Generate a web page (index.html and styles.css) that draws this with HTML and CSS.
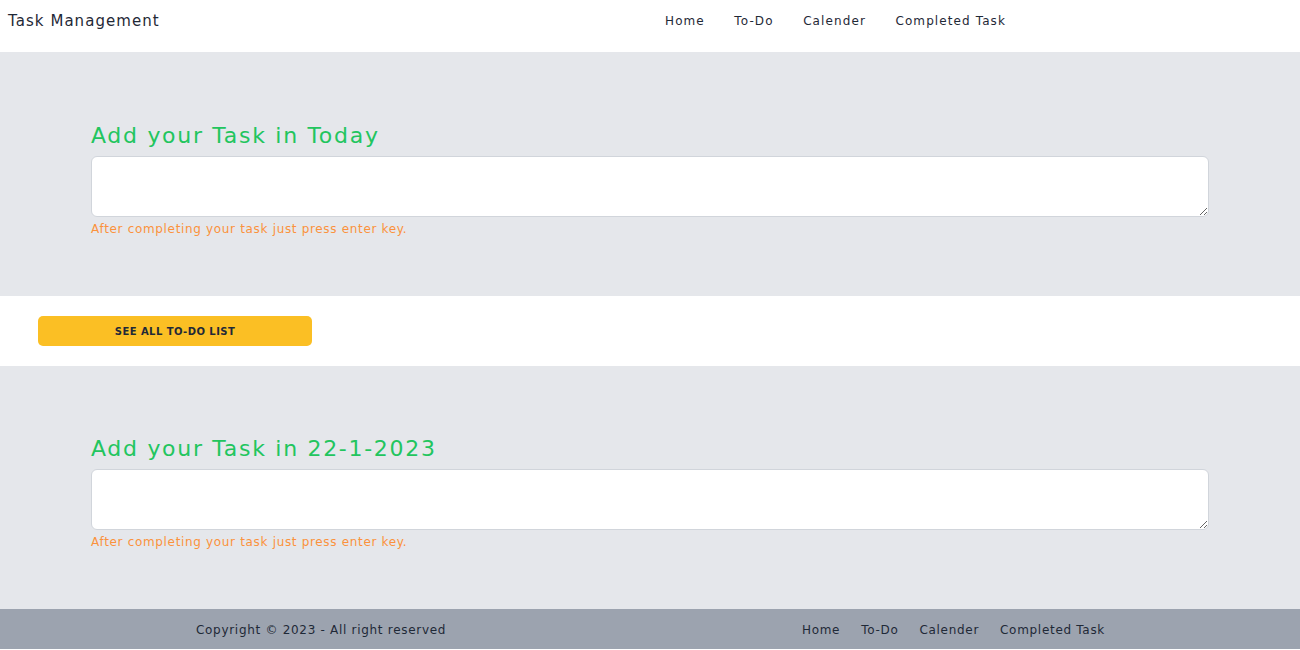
FILE: index.html
```html
<!DOCTYPE html>
<html lang="en">
<head>
<meta charset="utf-8">
<title>Task Management</title>
<link rel="stylesheet" href="styles.css">
</head>
<body>
<header class="topbar">
  <div class="brand">Task Management</div>
  <nav class="topnav">
    <a href="#">Home</a>
    <a href="#">To-Do</a>
    <a href="#">Calender</a>
    <a href="#">Completed Task</a>
  </nav>
</header>
<main>
  <section class="task-section">
    <h2 class="task-title">Add your Task in Today</h2>
    <textarea class="task-input"></textarea>
    <p class="task-hint">After completing your task just press enter key.</p>
  </section>
  <div class="action-row">
    <button class="see-all">SEE ALL TO-DO LIST</button>
  </div>
  <section class="task-section">
    <h2 class="task-title">Add your Task in 22-1-2023</h2>
    <textarea class="task-input"></textarea>
    <p class="task-hint">After completing your task just press enter key.</p>
  </section>
</main>
<footer class="footer">
  <div class="copyright">Copyright © 2023 - All right reserved</div>
  <nav class="footnav">
    <a href="#">Home</a>
    <a href="#">To-Do</a>
    <a href="#">Calender</a>
    <a href="#">Completed Task</a>
  </nav>
</footer>
</body>
</html>
```
FILE: styles.css
```css
* { box-sizing: border-box; }
html, body { margin: 0; padding: 0; background: #ffffff; }
body {
  font-family: "DejaVu Sans", "Open Sans", sans-serif;
  color: #1f2937;
}
a { color: inherit; text-decoration: none; }

.topbar {
  display: flex;
  align-items: flex-start;
  height: 53px;
  padding: 12px 294px 0 8px;
  border-bottom: 1px solid #e5e7eb;
}
.brand {
  font-size: 15px;
  line-height: 18px;
  letter-spacing: 1.05px;
  color: #1f2937;
}
.topnav {
  margin-left: auto;
  display: flex;
  gap: 29.5px;
  padding-top: 2px;
  font-size: 12px;
  line-height: 15px;
  letter-spacing: 1.1px;
  color: #1f2937;
}

.task-section {
  background: #e5e7eb;
  padding: 68px 91px 59px;
}
.task-title {
  margin: 0 0 5px;
  font-size: 22px;
  line-height: 30px;
  font-weight: 400;
  letter-spacing: 1.7px;
  color: #22c55e;
}
.task-input {
  display: block;
  width: 100%;
  height: 61px;
  border: 1px solid #d1d5db;
  border-radius: 6px;
  background: #ffffff;
  resize: vertical;
  font: inherit;
}
.task-hint {
  margin: 4px 0 0;
  font-size: 12px;
  line-height: 16px;
  letter-spacing: 0.67px;
  color: #fb923c;
}

.action-row {
  padding: 20px 38px;
}
.see-all {
  display: block;
  width: 274px;
  height: 30px;
  border: 0;
  border-radius: 5px;
  background: #fbbf24;
  color: #1f2937;
  font-family: inherit;
  font-size: 10px;
  font-weight: 700;
  letter-spacing: 0.45px;
}

.footer {
  display: flex;
  align-items: center;
  height: 40px;
  padding: 2px 195px 0 196px;
  background: #9ca3af;
  color: #1f2937;
  font-size: 12px;
  letter-spacing: 0.7px;
}
.footnav {
  margin-left: auto;
  display: flex;
  gap: 21px;
}
```
